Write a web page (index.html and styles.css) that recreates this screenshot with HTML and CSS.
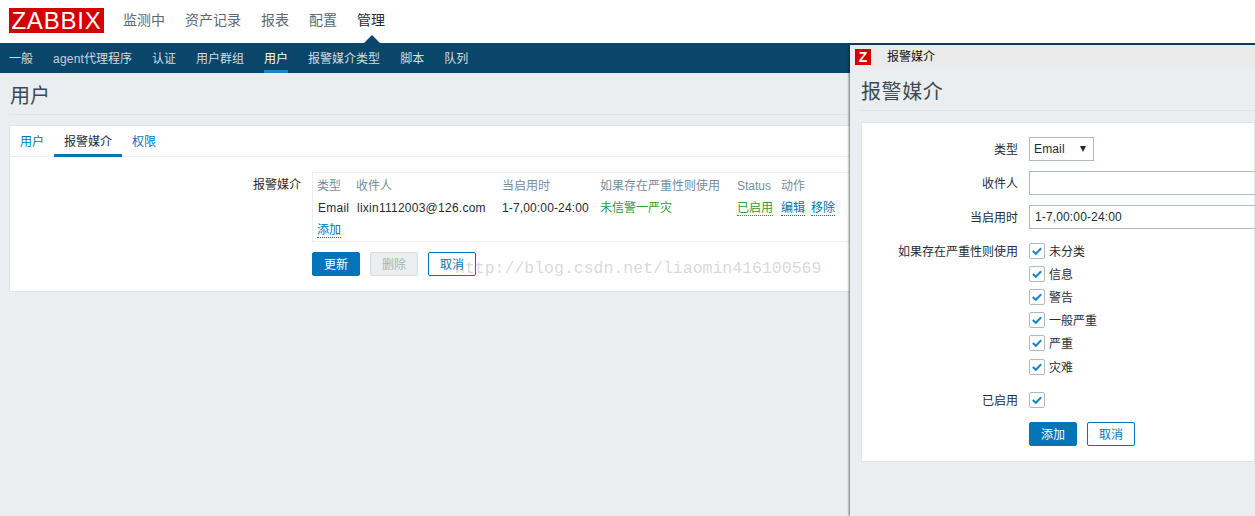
FILE: index.html
```html
<!DOCTYPE html>
<html lang="zh">
<head>
<meta charset="utf-8">
<title>报警媒介</title>
<link rel="stylesheet" href="styles.css">
</head>
<body>
<header class="topbar">
  <div class="logo">ZABBIX</div>
  <nav class="mainnav">
    <a>监测中</a><a>资产记录</a><a>报表</a><a>配置</a><a class="active">管理</a>
  </nav>
</header>
<nav class="subnav">
  <a>一般</a><a><span class="agent">agent</span>代理程序</a><a>认证</a><a>用户群组</a><a class="active">用户</a><a>报警媒介类型</a><a>脚本</a><a>队列</a>
</nav>
<main class="page">
  <h1 class="heading">用户</h1>
  <section class="card">
    <div class="tabs">
      <a>用户</a><a class="active">报警媒介</a><a>权限</a>
    </div>
    <div class="userform">
      <div class="userlabel">报警媒介</div>
      <div class="mediabox">
        <table class="media">
          <colgroup>
            <col class="c1"><col class="c2"><col class="c3"><col class="c4"><col class="c5"><col class="c6">
          </colgroup>
          <tr class="head"><td>类型</td><td>收件人</td><td>当启用时</td><td>如果存在严重性则使用</td><td>Status</td><td>动作</td></tr>
          <tr><td class="wide">Email</td><td class="wide">lixin1112003@126.com</td><td class="period">1-7,00:00-24:00</td><td class="green">未信警一严灾</td><td><a class="dot green">已启用</a></td><td><a class="dot">编辑</a><a class="dot gapped">移除</a></td></tr>
          <tr><td colspan="6"><a class="dot">添加</a></td></tr>
        </table>
      </div>
      <div class="spacer"></div>
      <div class="buttons">
        <button class="btn primary">更新</button>
        <button class="btn disabled">删除</button>
        <button class="btn outline">取消</button>
      </div>
    </div>
  </section>
</main>
<div class="watermark">http://blog.csdn.net/liaomin416100569</div>

<aside class="popup">
  <div class="wintitle">
    <span class="zicon">Z</span>
    <span class="wintext">报警媒介</span>
  </div>
  <h2 class="heading popheading">报警媒介</h2>
  <section class="card popcard">
    <div class="popform">
      <label class="plabel">类型</label>
      <div class="select"><span>Email</span><span class="arrow"></span></div>
      <label class="plabel">收件人</label>
      <div class="input"></div>
      <label class="plabel">当启用时</label>
      <div class="input">1-7,00:00-24:00</div>
      <label class="plabel short pad">如果存在严重性则使用</label>
      <div class="checks pad">
        <div class="check"><svg class="box" viewBox="0 0 16 16"><rect x=".5" y=".5" width="15" height="15" rx="1.5"/><path d="M3.8 8l3 2.8 5.4-5.6"/></svg><span class="ctext">未分类</span></div>
        <div class="check"><svg class="box" viewBox="0 0 16 16"><rect x=".5" y=".5" width="15" height="15" rx="1.5"/><path d="M3.8 8l3 2.8 5.4-5.6"/></svg><span class="ctext">信息</span></div>
        <div class="check"><svg class="box" viewBox="0 0 16 16"><rect x=".5" y=".5" width="15" height="15" rx="1.5"/><path d="M3.8 8l3 2.8 5.4-5.6"/></svg><span class="ctext">警告</span></div>
        <div class="check"><svg class="box" viewBox="0 0 16 16"><rect x=".5" y=".5" width="15" height="15" rx="1.5"/><path d="M3.8 8l3 2.8 5.4-5.6"/></svg><span class="ctext">一般严重</span></div>
        <div class="check"><svg class="box" viewBox="0 0 16 16"><rect x=".5" y=".5" width="15" height="15" rx="1.5"/><path d="M3.8 8l3 2.8 5.4-5.6"/></svg><span class="ctext">严重</span></div>
        <div class="check last"><svg class="box" viewBox="0 0 16 16"><rect x=".5" y=".5" width="15" height="15" rx="1.5"/><path d="M3.8 8l3 2.8 5.4-5.6"/></svg><span class="ctext">灾难</span></div>
      </div>
      <label class="plabel short enabled">已启用</label>
      <div class="check enabled"><svg class="box" viewBox="0 0 16 16"><rect x=".5" y=".5" width="15" height="15" rx="1.5"/><path d="M3.8 8l3 2.8 5.4-5.6"/></svg></div>
      <div class="spacer"></div>
      <div class="buttons popbuttons">
        <button class="btn primary">添加</button>
        <button class="btn outline">取消</button>
      </div>
    </div>
  </section>
</aside>
</body>
</html>
```

FILE: styles.css
```css
* { box-sizing: border-box; }
html, body { height: 100%; }
body {
  margin: 0;
  height: 516px;
  overflow: hidden;
  position: relative;
  background: #ebeef0;
  color: #1f2c33;
  font: 12px/16px "Liberation Sans", "Noto Sans CJK SC", sans-serif;
}
a { color: #0275b8; text-decoration: none; }

.topbar {
  height: 43px;
  background: #fff;
  display: flex;
  align-items: flex-start;
  padding: 8px 0 0 9px;
}
.logo {
  width: 95px;
  height: 25px;
  background: #d40000;
  color: #fff;
  font-size: 24px;
  line-height: 25px;
  text-align: center;
  letter-spacing: .8px;
}
.mainnav {
  display: flex;
  gap: 20px;
  margin-left: 19px;
  font-size: 14px;
  line-height: 24px;
}
.mainnav a { color: #5b6a72; position: relative; height: 35px; }
.mainnav a.active { color: #1f2c33; }
.mainnav a.active::after {
  content: "";
  position: absolute;
  left: 7px;
  bottom: 0;
  border-left: 8px solid transparent;
  border-right: 8px solid transparent;
  border-bottom: 8px solid #0a466a;
}

.subnav {
  height: 30px;
  background: #0a466a;
  display: flex;
  gap: 20px;
  padding-left: 9px;
}
.subnav a {
  color: #d3dde3;
  line-height: 32px;
  height: 30px;
}
.subnav a.active {
  color: #fff;
  border-bottom: 3px solid #1a85c8;
}
.agent { color: #c5d3dc; letter-spacing: .2px; }

.page { padding: 0 0 0 9px; }
.heading {
  margin: 0;
  height: 42px;
  font-size: 20px;
  font-weight: normal;
  line-height: 46px;
  padding-left: 1px;
  color: #3b4a52;
  border-bottom: 1px solid #dfe4e7;
}
.card {
  background: #fff;
  border: 1px solid #dfe4e7;
  margin-top: 10px;
}
.tabs {
  height: 31px;
  display: flex;
  border-bottom: 1px solid #ebeef0;
}
.tabs a {
  padding: 0 10px;
  line-height: 32px;
  height: 31px;
}
.tabs a.active {
  color: #1f2c33;
  border-bottom: 3px solid #0275b8;
}
.userform {
  display: grid;
  grid-template-columns: 291px 1fr;
  column-gap: 11px;
  row-gap: 10px;
  padding: 15px 0;
}
.userlabel {
  text-align: right;
  padding-top: 5px;
}
.mediabox {
  border: 1px solid #ebeef0;
  height: 70px;
  padding: 2px 0 0 4px;
}
.media { border-collapse: collapse; table-layout: fixed; width: 534px; }
.media td { padding: 0 0 1px; height: 22px; white-space: nowrap; }
.media td.wide { padding-left: 1px; letter-spacing: .25px; }
.media td.period { letter-spacing: .14px; }
.c1 { width: 39px; }
.c2 { width: 146px; }
.c3 { width: 98px; }
.c4 { width: 137px; }
.c5 { width: 44px; }
.c6 { width: 70px; }
.head td { color: #768d99; }
.green { color: #2f9a35; }
.dot { border-bottom: 1px dotted currentColor; }
a.green { color: #2f9a35; }
.gapped { margin-left: 6px; }

.buttons { display: flex; gap: 10px; }
.btn {
  width: 48px;
  height: 24px;
  padding: 1px 0 0;
  border-radius: 2px;
  border: 1px solid #0275b8;
  font: inherit;
}
.primary { background: #0275b8; color: #fff; }
.outline { background: #fff; color: #0275b8; }
.disabled { background: #ebeef0; border-color: #d6dcdf; color: #a5b4bc; }

.watermark {
  position: absolute;
  left: 455px;
  top: 260px;
  font: 16.5px/18px "Liberation Mono", monospace;
  color: rgba(120, 120, 120, .3);
  white-space: nowrap;
}

.popup {
  position: absolute;
  left: 850px;
  top: 45px;
  right: 0;
  bottom: 0;
  background: #ebeef0;
  box-shadow: -1px 0 2px rgba(0, 0, 0, .55);
}
.wintitle {
  height: 23px;
  background: #ebebeb;
  display: flex;
  align-items: center;
  padding-left: 5px;
  color: #111;
}
.zicon {
  width: 16px;
  height: 16px;
  background: #d40000;
  color: #fff;
  font-weight: bold;
  font-size: 14px;
  line-height: 16px;
  text-align: center;
}
.wintext { margin-left: 16px; }
.popheading {
  margin-left: 10px;
  height: 43px;
  line-height: 48px;
  padding-left: 1px;
  letter-spacing: .6px;
}
.popcard {
  margin: 11px 0 0 11px;
  height: 340px;
  padding-top: 14px;
}
.popform {
  display: grid;
  grid-template-columns: 156px 1fr;
  column-gap: 11px;
  row-gap: 10px;
}
.plabel { text-align: right; line-height: 26px; height: 24px; }
.plabel.short { line-height: 18px; height: 16px; }
.plabel.enabled { margin-top: 7px; }
.pad { margin-top: 4px; }
.select {
  width: 65px;
  height: 24px;
  border: 1px solid #acbbc2;
  padding: 0 5px 0 4px;
  line-height: 22px;
  letter-spacing: .15px;
  display: flex;
  justify-content: space-between;
  align-items: center;
}
.arrow {
  border-left: 3.5px solid transparent;
  border-right: 3.5px solid transparent;
  border-top: 6px solid #1f2c33;
  margin-right: 2px;
}
.input {
  height: 24px;
  border: 1px solid #acbbc2;
  padding: 0 5px;
  line-height: 22px;
  letter-spacing: .14px;
  margin-right: -2px;
}
.checks { display: flex; flex-direction: column; gap: 7px; }
.check { display: flex; align-items: center; gap: 4px; height: 16px; }
.check.last { margin-top: 1px; }
.check.enabled { margin-top: 7px; }
.ctext { padding-top: 2px; }
.box { width: 16px; height: 16px; flex: none; }
.box rect { fill: #fff; stroke: #acbbc2; }
.box path { fill: none; stroke: #1a85c8; stroke-width: 2; }
.popbuttons { margin-top: 4px; }
```
